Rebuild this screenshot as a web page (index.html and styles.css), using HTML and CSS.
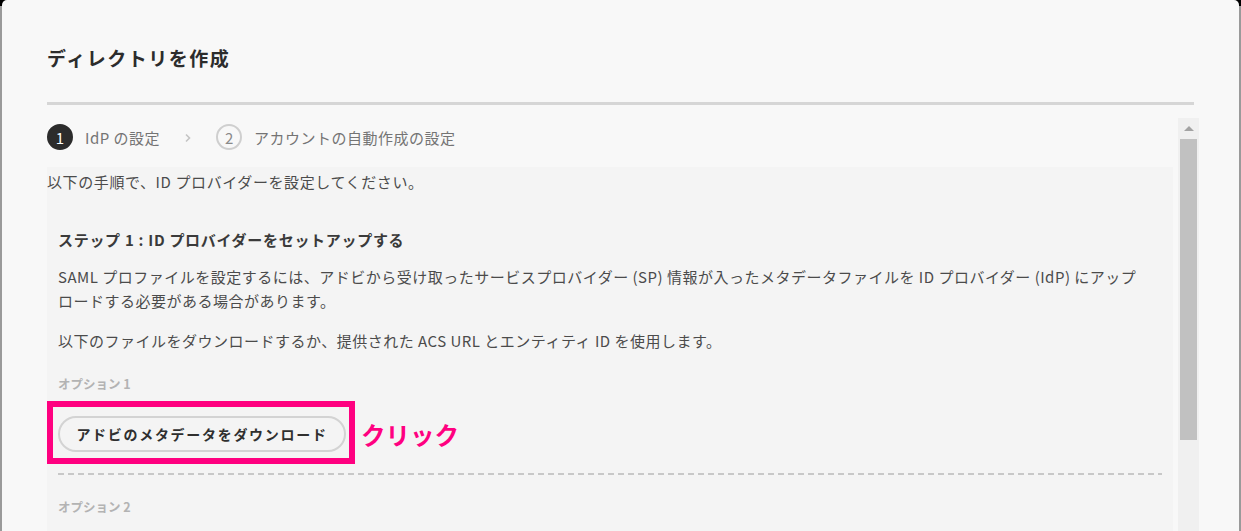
FILE: index.html
```html
<!DOCTYPE html>
<html lang="ja">
<head>
  <meta charset="UTF-8">
  <title>ディレクトリを作成</title>
  <link rel="stylesheet" href="styles.css">
</head>
<body>

  <div class="dialog">
    <h2 class="dialog-title">ディレクトリを作成</h2>
    <div class="dialog-rule"></div>

    <div class="dialog-body">
      <div class="content">

        <div class="stepper">
          <span class="step-num active">1</span>
          <span class="step-label">IdP の設定</span>
          <svg class="step-chevron" width="8" height="10" viewBox="0 0 8 10">
            <path d="M2 1.5 L5.5 5 L2 8.5" fill="none" stroke="#c4c4c4" stroke-width="1.6"/>
          </svg>
          <span class="step-num">2</span>
          <span class="step-label">アカウントの自動作成の設定</span>
        </div>

        <div class="panel">
          <p class="intro">以下の手順で、ID プロバイダーを設定してください。</p>

          <div class="section">
            <h3 class="section-title">ステップ 1 : ID プロバイダーをセットアップする</h3>
            <p class="text">SAML プロファイルを設定するには、アドビから受け取ったサービスプロバイダー (SP) 情報が入ったメタデータファイルを ID プロバイダー (IdP) にアップロードする必要がある場合があります。</p>
            <p class="text second">以下のファイルをダウンロードするか、提供された ACS URL とエンティティ ID を使用します。</p>

            <div class="option-label">オプション 1</div>
            <div class="option-row">
              <div class="highlight">
                <button class="btn-pill">アドビのメタデータをダウンロード</button>
              </div>
              <span class="click-note">クリック</span>
            </div>

            <div class="dashed"></div>

            <div class="option-label second">オプション 2</div>
          </div>
        </div>

      </div>

      <div class="scrollbar">
        <div class="scroll-up"></div>
        <div class="scroll-thumb"></div>
      </div>
    </div>
  </div>

</body>
</html>
```

FILE: styles.css
```css
html {
  background: linear-gradient(#000 0, #000 6px, #9a9a9a 6px);
}
body {
  margin: 0;
  padding: 0 2px;
  height: 531px;
  overflow: hidden;
  font-family: "Noto Sans CJK JP", "Noto Sans", sans-serif;
  color: #4b4b4b;
}
.dialog {
  background: #f8f8f8;
  border-radius: 5px 5px 0 0;
  height: 531px;
  padding: 44px 0 0 45px;
  box-sizing: border-box;
  overflow: hidden;
}
.dialog-title {
  margin: 0;
  font-size: 19px;
  line-height: 28px;
  font-weight: bold;
  color: #2c2c2c;
  letter-spacing: 1.5px;
}
.dialog-rule {
  width: 1147px;
  height: 3px;
  margin-top: 30px;
  background: #d6d6d6;
}
.dialog-body {
  display: flex;
  gap: 5px;
  margin-top: 13px;
}
.content {
  width: 1126px;
}
.stepper {
  display: flex;
  align-items: center;
  height: 38px;
  margin-bottom: 11px;
  font-size: 15px;
  color: #747474;
}
.step-num {
  width: 26px;
  height: 26px;
  border-radius: 50%;
  border: 2px solid #cfcfcf;
  box-sizing: border-box;
  display: flex;
  align-items: center;
  justify-content: center;
  font-size: 15px;
  color: #8a8a8a;
}
.step-num.active {
  background: #2c2c2c;
  border-color: #2c2c2c;
  color: #fff;
}
.step-label {
  margin-left: 12px;
  letter-spacing: 0.5px;
}
.step-chevron {
  margin: 2px 24px 0 24px;
}
.panel {
  background: #f4f4f4;
  padding-top: 3px;
  height: 364px;
  box-sizing: border-box;
  overflow: hidden;
}
.intro {
  margin: 0;
  font-size: 15px;
  line-height: 24px;
  letter-spacing: 0.6px;
}
.section {
  padding: 34px 11px 0 11px;
}
.section-title {
  margin: 0;
  font-size: 15px;
  line-height: 24px;
  font-weight: bold;
  color: #3a3a3a;
  letter-spacing: 0.7px;
}
.text {
  margin: 13px 16px 0 0;
  font-size: 15px;
  line-height: 24px;
  letter-spacing: 0.5px;
}
.text.second {
  margin-top: 16px;
}
.option-label {
  margin-top: 22px;
  font-size: 12.5px;
  line-height: 18px;
  font-weight: bold;
  color: #b3b3b3;
}
.option-label.second {
  margin-top: 23px;
}
.option-row {
  display: flex;
  align-items: center;
  margin-top: 8px;
}
.highlight {
  margin-left: -11px;
  border: 6px solid #ff0080;
  padding: 9px 3px 6px 5px;
}
.btn-pill {
  display: block;
  width: 288px;
  height: 36px;
  border: 2px solid #d3d3d3;
  border-radius: 18px;
  background: #f4f4f4;
  font-family: inherit;
  font-size: 14px;
  font-weight: bold;
  color: #2f2f2f;
  letter-spacing: 1.7px;
}
.click-note {
  margin: 4px 0 0 6px;
  font-size: 24.5px;
  font-weight: bold;
  color: #ff0080;
}
.dashed {
  margin-top: 9px;
  height: 2px;
  background: repeating-linear-gradient(90deg, #c8c8c8 0, #c8c8c8 6px, transparent 6px, transparent 10px);
}
.scrollbar {
  width: 21px;
  height: 413px;
  background: #f0f0f0;
}
.scroll-up {
  height: 21px;
  position: relative;
}
.scroll-up::after {
  content: "";
  position: absolute;
  left: 6px;
  top: 8px;
  border-left: 5px solid transparent;
  border-right: 5px solid transparent;
  border-bottom: 5px solid #a3a3a3;
}
.scroll-thumb {
  margin: 0 2px;
  height: 301px;
  background: #c1c1c1;
}
```
